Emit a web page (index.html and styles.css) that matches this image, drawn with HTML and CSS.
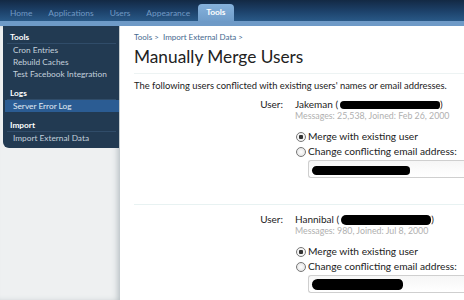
FILE: index.html
```html
<!DOCTYPE html>
<html lang="en">
<head>
  <meta charset="UTF-8" />
  <title>Manually Merge Users - Admin</title>
  <link rel="stylesheet" href="styles.css">
</head>
<body>
  <div class="header">
    <ul class="tabs">
      <li>Home</li>
      <li>Applications</li>
      <li>Users</li>
      <li>Appearance</li>
      <li class="active">Tools</li>
    </ul>
  </div>
  <div class="strip"></div>

  <div class="main">
    <div class="side-col">
      <div class="sidebar">
        <h4>Tools</h4>
        <a>Cron Entries</a>
        <a>Rebuild Caches</a>
        <a>Test Facebook Integration</a>
        <h4>Logs</h4>
        <a class="selected">Server Error Log</a>
        <h4>Import</h4>
        <a>Import External Data</a>
      </div>
    </div>

    <div class="content">
      <div class="crumbs">Tools &gt; &nbsp;Import External Data &gt;</div>
      <h1>Manually Merge Users</h1>
      <p class="intro">The following users conflicted with existing users' names or email addresses.</p>

      <div class="user-block">
        <div class="label">User:</div>
        <div class="value">
          <div class="name">Jakeman (<span class="redact r1"></span>)</div>
          <div class="meta">Messages: 25,538, Joined: Feb 26, 2000</div>
          <label class="opt"><input type="radio" name="u1" checked> Merge with existing user</label>
          <label class="opt"><input type="radio" name="u1"> Change conflicting email address:</label>
          <div class="textbox"><span class="redact r2"></span></div>
        </div>
      </div>

      <div class="user-block second">
        <div class="label">User:</div>
        <div class="value">
          <div class="name">Hannibal (<span class="redact r3"></span>)</div>
          <div class="meta">Messages: 980, Joined: Jul 8, 2000</div>
          <label class="opt"><input type="radio" name="u2" checked> Merge with existing user</label>
          <label class="opt"><input type="radio" name="u2"> Change conflicting email address:</label>
          <div class="textbox"><span class="redact r4"></span></div>
        </div>
      </div>
    </div>
  </div>
</body>
</html>
```

FILE: styles.css
```css
body {
  margin: 0;
  font-family: Lato, "DejaVu Sans", sans-serif;
  font-size: 10px;
  color: #222;
  background: #fff;
  height: 300px;
  overflow: hidden;
}

.header {
  height: 21px;
  background: linear-gradient(to bottom, #132944, #1d426b 55%, #295987);
}

.tabs {
  list-style: none;
  margin: 0;
  padding: 0 0 0 2px;
  display: flex;
  align-items: flex-end;
  height: 21px;
}

.tabs li {
  color: #7199c4;
  padding: 0 8px;
  font-size: 8.4px;
  line-height: 16px;
}

.tabs li.active {
  color: #fff;
  font-weight: bold;
  background: linear-gradient(to bottom, #86b2dc, #6f9cc9);
  border-radius: 4px 4px 0 0;
  padding: 0 8px;
  line-height: 17px;
}

.strip {
  height: 5px;
  background: #6e9ac7;
}

.main {
  display: flex;
  height: 274px;
}

.side-col {
  width: 120px;
  flex-shrink: 0;
  background: #eef0f1;
  box-shadow: inset -4px 0 6px -2px #b3bcc0;
}

.sidebar {
  margin-left: 3px;
  width: 116px;
  background: #223a52;
  border-radius: 0 0 0 6px;
  padding: 5px 0 4px;
}

.sidebar h4 {
  margin: 0 3px 0 4px;
  padding: 0 3px;
  color: #fff;
  font-size: 8.3px;
  line-height: 12px;
  border-bottom: 1px solid #304c69;
}

.sidebar a {
  display: block;
  color: #c3d0dc;
  padding: 0 0 0 10px;
  line-height: 12px;
  font-size: 8.3px;
}

.sidebar a + h4 { margin-top: 7px; }

.sidebar a.selected {
  background: #2b5c93;
  color: #e2ebf4;
  margin-left: 2px;
  padding-left: 8px;
}

.content {
  flex: 1;
  padding: 5px 0 0 14px;
  overflow: hidden;
  white-space: nowrap;
}

.crumbs {
  color: #46698f;
  font-size: 8px;
  line-height: 12px;
}

h1 {
  margin: 4px 0 0;
  font-size: 17.3px;
  line-height: 20px;
  font-weight: normal;
  color: #222;
  padding-bottom: 6px;
  border-bottom: 1px solid #edf3f3;
}

.intro {
  margin: 6px 0 0;
  font-size: 9.4px;
  line-height: 12px;
}

.user-block {
  display: grid;
  grid-template-columns: 149px 1fr;
  column-gap: 12px;
  padding: 6px 0 26px;
}

.user-block.second {
  border-top: 1px solid #e8f2f2;
  padding-top: 8px;
}

.label {
  text-align: right;
  font-size: 10px;
  line-height: 13px;
}

.name {
  font-size: 10px;
  line-height: 13px;
}

.meta {
  color: #b0b0b0;
  font-size: 8.8px;
  line-height: 10px;
}

.redact {
  display: inline-block;
  background: #000;
  border-radius: 6px 5px 5px 6px;
  vertical-align: middle;
}

.r1 { width: 100px; height: 8px; margin-left: 2px; }
.r3 { width: 90px; height: 10px; margin-left: 2px; }
.r2 { width: 98px; height: 9px; margin: 4px 0 0 3px; }
.r4 { width: 91px; height: 11px; margin: 2px 0 0 3px; }

.opt {
  display: flex;
  align-items: center;
  font-size: 10.2px;
  line-height: 15px;
}

.meta + .opt { margin-top: 8px; }

.opt input {
  appearance: none;
  width: 10px;
  height: 10px;
  margin: 0 2px 0 1px;
  border: 1px solid #777;
  border-radius: 50%;
  background: radial-gradient(circle, #fff, #ddd);
}

.opt input:checked {
  background: radial-gradient(circle, #333 0 2px, #f4f4f4 2.5px);
}

.textbox {
  margin: 1px 0 0 13px;
  height: 16px;
  border: 1px solid #cfcfcf;
  border-right: none;
  border-radius: 3px 0 0 3px;
  background: linear-gradient(to bottom, #f6f6f6, #fff);
}
```
